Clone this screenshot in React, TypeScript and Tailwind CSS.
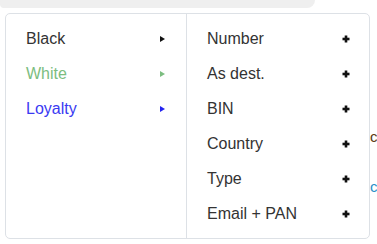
import { ReactNode } from "react";

const left = [
  { label: "Black", color: "text-[#333333]", arrow: "border-l-[#111111]" },
  { label: "White", color: "text-[#7cbd80]", arrow: "border-l-[#7cbd80]" },
  { label: "Loyalty", color: "text-[#3a3af2]", arrow: "border-l-[#2323f0]" },
];

const right = ["Number", "As dest.", "BIN", "Country", "Type", "Email + PAN"];

function Plus() {
  return (
    <svg width="8" height="8" viewBox="0 0 8 8" className="block">
      <rect x="2.7" y="0.5" width="2.6" height="7" fill="#111" />
      <rect x="0.5" y="2.7" width="7" height="2.6" fill="#111" />
    </svg>
  );
}

function Row({ children, end }: { children: ReactNode; end: ReactNode }) {
  return (
    <div className="flex h-[35px] items-center justify-between">
      {children}
      {end}
    </div>
  );
}

export default function App() {
  return (
    <div
      className="relative h-[244px] w-[377px] overflow-hidden bg-white"
      style={{ fontFamily: '"Liberation Sans", Arial, sans-serif' }}
    >
      <div className="h-[8px] w-[315px] rounded-br-[12px] rounded-bl-[6px] bg-[#efefef]" />

      {/* page content peeking out behind the menu */}
      <div className="ml-[370px] mt-[121px] text-[15px] leading-none">
        <div className="text-[#5a3a10]">c</div>
        <div className="mt-[35px] text-[#2a8fc8]">c</div>
      </div>

      <div className="absolute left-[5px] top-[13px] flex h-[226px] w-[365px] rounded-[5px] border border-[#dde1e6] bg-white text-[16px]">
        <div className="w-[181px] border-r border-[#dde1e6] py-[7px] pl-[20px] pr-[21px]">
          {left.map((l) => (
            <Row
              key={l.label}
              end={<span className={`h-0 w-0 border-y-[3.5px] border-l-[5px] border-y-transparent ${l.arrow}`} />}
            >
              <span className={l.color}>{l.label}</span>
            </Row>
          ))}
        </div>
        <div className="flex-1 py-[7px] pl-[20px] pr-[19px]">
          {right.map((r) => (
            <Row key={r} end={<Plus />}>
              <span className="text-[#333333]">{r}</span>
            </Row>
          ))}
        </div>
      </div>
    </div>
  );
}
